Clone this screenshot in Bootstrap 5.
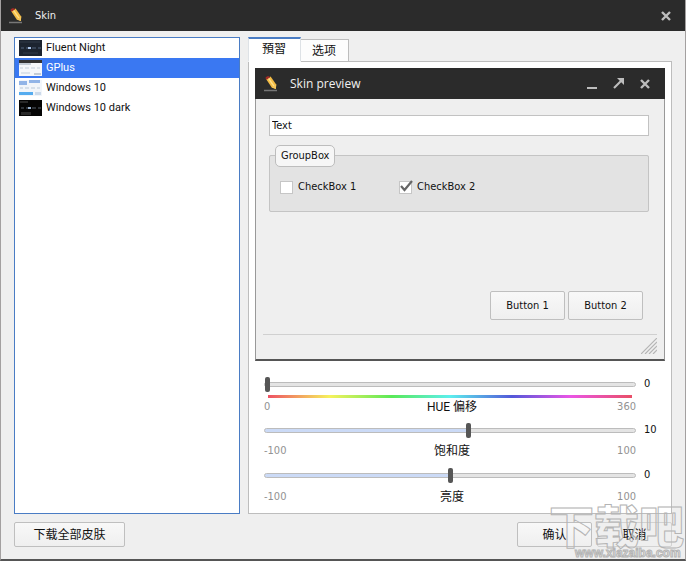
<!DOCTYPE html>
<html lang="zh-CN">
<head>
<meta charset="utf-8">
<meta name="viewport" content="width=device-width, initial-scale=1">
<title>Skin</title>
<link href="https://cdn.jsdelivr.net/npm/bootstrap@5.3.0/dist/css/bootstrap.min.css" rel="stylesheet">
<style>
  :root { --ink: #111; --dark: #2b2b2b; --face: #efefef; --line: #bdbdbd; --blue: #4a7cc4; }
  body { font-family: "DejaVu Sans Condensed", "Noto Sans", "Noto Sans CJK SC", sans-serif; font-size: 11px; line-height: 16px; color: var(--ink); background: var(--face); }
  .zh { font-family: Roboto, "Noto Sans CJK SC", sans-serif; font-size: 12px; }
  .window { border: 1px solid #a3a0a0; border-top: 0; border-bottom: 2px solid #555; overflow: hidden; }
  .titlebar { height: 31px; background: var(--dark); color: #f0f0f0; margin: 0 -1px; padding: 0 15px 0 7px; gap: 10px; }
  .titlebar h1, .titlebar h2 { font-size: 11px; line-height: 16px; font-weight: 400; margin: 0; }
  .titlebar h2 { font-family: "Open Sans", sans-serif; font-size: 12px; }
  .tool { border: 0; background: none; padding: 0; line-height: 0; color: #bdbdbd; }
  .work { display: grid; grid-template-columns: 226px minmax(0, 1fr); column-gap: 8px; padding: 6px 13px 0; }
  .skins { background: #fff; border: 1px solid var(--blue); border-radius: 0; }
  .skins .list-group-item { font-family: Roboto, sans-serif; height: 20px; padding: 0 3px 0 4px; border: 0; border-radius: 0; color: var(--ink); display: flex; align-items: center; gap: 4px; }
  .skins .list-group-item.active { background: #3a78f2; color: #fff; margin: 0; }
  .tabs { padding: 0; border: 0; position: relative; margin-bottom: -1px; align-items: flex-end; }
  .tabs .nav-link { color: var(--ink); border: 1px solid var(--line); border-radius: 0; margin: 0; padding: 0 12px 0 11px; height: 23px; background: #fdfdfd; line-height: 20px; }
  .tabs .nav-link.active { height: 25px; padding: 0 14px 3px 13px; border-top: 2px solid var(--blue); border-bottom-color: #fff; background: #fff; color: var(--ink); }
  .tabs .nav-item + .nav-item .nav-link { border-left: 0; }
  .pane { background: #fff; border: 1px solid var(--line); padding: 6px 6px 0; }
  .preview { background: var(--face); border: 1px solid #999; border-top: 0; border-bottom: 2px solid #555; }
  .preview-form { padding: 16px 15px 0 13px; }
  .field { height: 21px; padding: 0 2px; font-size: 11px; line-height: 16px; color: var(--ink); border: 1px solid #c2c2c2; border-radius: 0; }
  .group { border: 1px solid #c4c4c4; border-radius: 2px; background: #e3e3e3; height: 57px; margin-top: 19px; padding: 0 10px; }
  .group legend { float: left; width: auto; font-size: 11px; line-height: 16px; background: #f6f6f6; border: 1px solid var(--line); border-radius: 5px; padding: 2px 5px; margin: -11px 0 12px -5px; }
  .checks { clear: both; display: grid; grid-template-columns: 119px auto; justify-content: start; }
  .checks .form-check { min-height: 0; margin: 0; padding: 0; display: flex; align-items: center; gap: 5px; }
  .checks .form-check-input { float: none; margin: 0; width: 13px; height: 13px; border: 1px solid #c6c6c6; border-radius: 0; background: #fff; }
  .checks .form-check-input[type=checkbox]:checked { background: #fff; border-color: #c6c6c6; }
  .tick { position: absolute; left: 1px; top: 0; pointer-events: none; }
  .btn-face { font-size: 11px; line-height: 16px; color: var(--ink); border: 1px solid #bfbfbf; border-radius: 2px; background: linear-gradient(#f8f8f8, #efefef); min-width: 75px; padding: 4px 8px; height: 25px; }
  .btn-face.zh { font-size: 12px; }
  .btn-tall { height: 29px; padding: 5px 8px; }
  .buttons { margin-top: 79px; padding-right: 6px; gap: 3px; }
  .statusbar { margin: 14px 7px 5px; border-top: 1px solid #d0d0d0; height: 20px; }
  .sliders { display: grid; grid-template-columns: minmax(0, 1fr) 21px; column-gap: 8px; padding: 15px 0 0 9px; }
  .form-range { display: block; height: 16px; }
  .form-range::-webkit-slider-runnable-track { height: 5px; border: 1px solid #bcbcbc; border-radius: 3px; background: linear-gradient(#cbdaf6, #cbdaf6) 0 0 / var(--fill) 100% no-repeat #e4e4e4; }
  .form-range::-webkit-slider-thumb { width: 5px; height: 15px; margin-top: -6px; border-radius: 2px; background: #565656; box-shadow: none; }
  .spectrum { height: 3px; margin: 3px 4px 1px; background: linear-gradient(90deg, #ee5164, #f6f25c 17%, #59e957 34%, #5cefee 50%, #5358d9 67%, #ea55e6 83%, #e94f67); }
  .scale { display: grid; grid-template-columns: 1fr auto 1fr; color: #929292; line-height: 16px; }
  .scale span:last-child { text-align: right; }
  .scale label { color: var(--ink); padding-left: 4px; }
  .scale-1 { margin-bottom: 7px; }
  .scale-2 { margin: 5px 0 8px; }
  .scale-3 { margin: 6px 0 8px; }
  .footer-bar { padding: 8px 13px 12px; gap: 5px; }
  .btn-wide { width: 111px; }
  .btn-faint { border-color: #d2d2d2; background: none; }
  .stamp { position: absolute; right: 0; bottom: 0; width: 136px; pointer-events: none; }
</style>
<script src="https://cdn.jsdelivr.net/npm/bootstrap@5.3.0/dist/js/bootstrap.bundle.min.js"></script>
</head>
<body>
<svg width="0" height="0" class="position-absolute" aria-hidden="true">
  <symbol id="pencil" viewBox="0 0 18 18">
    <path d="M2 15.5h13" stroke="#777" stroke-width="1.5"/>
    <path d="M4.2 4.2 8.6 1.5l5.6 8.1-.3 4.5-4.2-1.7z" fill="#f4bd45"/>
    <path d="m6.3 3 5.8 8.3" stroke="#ffe08a" stroke-width="1.4"/>
    <path d="M3.4 3C4 1.4 5.8.8 7 1.3l1.2 1L4.5 4.8z" fill="#a02c26"/>
    <path d="m9.7 12.4 4.5-2.8-.3 4.5z" fill="#f4c65c"/>
  </symbol>
  <symbol id="cross" viewBox="0 0 10 10"><path d="m1 1 8 8M9 1 1 9" stroke="currentColor" stroke-width="2.4"/></symbol>
</svg>

<div class="window min-vh-100 d-flex flex-column position-relative">
  <header class="titlebar d-flex align-items-center">
    <svg width="18" height="18" aria-hidden="true"><use href="#pencil"/></svg>
    <h1 class="flex-grow-1">Skin</h1>
    <button type="button" class="tool" aria-label="Close"><svg width="10" height="10"><use href="#cross"/></svg></button>
  </header>

  <main class="work flex-grow-1">
    <div class="skins list-group">
      <button type="button" class="list-group-item list-group-item-action">
        <svg width="23" height="16" aria-hidden="true"><path fill="#1c2430" d="M0 0h23v16H0z"/><path d="M1 2h20M4 13h15" stroke="#303b49"/><path d="M2 8h3m2 0h2m4 0h4m2 0h3" stroke="#53657e"/><path fill="#a9c4ea" d="M9 7h3v2H9z"/></svg>
        Fluent Night</button>
      <button type="button" class="list-group-item list-group-item-action active">
        <svg width="23" height="16" aria-hidden="true"><path fill="#f5f7fa" d="M0 0h23v16H0z"/><path fill="#333" d="M0 0h23v3H0z"/><path fill="#c4ccd5" d="M0 3h12v2H0zM15 13h7v2h-7z"/><path d="M1 8h3m2 0h4m2 0h4m2 0h3M2 13h9" stroke="#c3cfdc"/></svg>
        GPlus</button>
      <button type="button" class="list-group-item list-group-item-action">
        <svg width="23" height="16" aria-hidden="true"><path fill="#f1f5fa" d="M0 0h23v16H0z"/><path fill="#91b4e7" d="M0 1h8v4H0zM10 0h11v3H10z"/><path d="M1 8h3m2 0h4m2 0h4m2 0h3" stroke="#b9c9da"/><path fill="#55acef" d="M0 12h14v3H0z"/><path fill="#ccdaea" d="M16 12h6v3h-6z"/></svg>
        Windows 10</button>
      <button type="button" class="list-group-item list-group-item-action">
        <svg width="23" height="16" aria-hidden="true"><path fill="#050505" d="M0 0h23v16H0z"/><path fill="#292929" d="M1 1h8v2H1zM2 12h10v3H2z"/><path d="M2 8h3m2 0h2m4 0h4m2 0h3" stroke="#56606c"/><path fill="#9ab4d3" d="M9 7h3v2H9z"/></svg>
        Windows 10 dark</button>
    </div>

    <section class="d-flex flex-column">
      <ul class="tabs nav nav-tabs" role="tablist">
        <li class="nav-item" role="presentation"><button type="button" class="nav-link active zh" lang="zh-TW" role="tab" aria-selected="true">預習</button></li>
        <li class="nav-item" role="presentation"><button type="button" class="nav-link zh" role="tab" aria-selected="false">选项</button></li>
      </ul>
      <div class="pane flex-grow-1">
        <div class="preview">
          <div class="titlebar d-flex align-items-center">
            <svg width="18" height="18" aria-hidden="true"><use href="#pencil"/></svg>
            <h2 class="flex-grow-1">Skin preview</h2>
            <div class="d-flex align-items-center gap-3">
              <button type="button" class="tool" aria-label="Minimize"><svg width="10" height="10"><path fill="currentColor" d="M0 8h10v2H0z"/></svg></button>
              <button type="button" class="tool" aria-label="Maximize"><svg width="11" height="11"><path d="m1 10 7-7" stroke="currentColor" stroke-width="2.2"/><path fill="currentColor" d="M4 0h7v7z"/></svg></button>
              <button type="button" class="tool" aria-label="Close preview"><svg width="10" height="10"><use href="#cross"/></svg></button>
            </div>
          </div>
          <form class="preview-form">
            <input class="form-control field" type="text" value="Text" aria-label="Text">
            <fieldset class="group">
              <legend>GroupBox</legend>
              <div class="checks">
                <div class="form-check"><input class="form-check-input" type="checkbox" id="c1"><label for="c1">CheckBox 1</label></div>
                <div class="form-check position-relative"><input class="form-check-input" type="checkbox" id="c2" checked><svg class="tick" width="14" height="14" aria-hidden="true"><path d="m1 7 3.5 4L12 2" fill="none" stroke="#666" stroke-width="2.2"/></svg><label for="c2">CheckBox 2</label></div>
              </div>
            </fieldset>
            <div class="buttons d-flex justify-content-end">
              <button type="button" class="btn btn-face btn-tall">Button 1</button>
              <button type="button" class="btn btn-face btn-tall">Button 2</button>
            </div>
          </form>
          <div class="statusbar d-flex justify-content-end align-items-end">
            <svg width="16" height="16" aria-hidden="true"><path d="M0 16 16 0M4 16 16 4M8 16l8-8M12 16l4-4" stroke="#b5b5b5" stroke-width="1.2"/></svg>
          </div>
        </div>

        <div class="sliders">
          <input type="range" class="form-range" id="hue" min="0" max="360" value="0" style="--fill:0%">
          <output for="hue">0</output>
          <div>
            <div class="spectrum"></div>
            <div class="scale scale-1"><span>0</span><label class="zh" for="hue">HUE 偏移</label><span>360</span></div>
          </div><span></span>
          <input type="range" class="form-range" id="sat" min="-100" max="100" value="10" style="--fill:55%">
          <output for="sat">10</output>
          <div class="scale scale-2"><span>-100</span><label class="zh" for="sat">饱和度</label><span>100</span></div><span></span>
          <input type="range" class="form-range" id="lum" min="-100" max="100" value="0" style="--fill:50%">
          <output for="lum">0</output>
          <div class="scale scale-3"><span>-100</span><label class="zh" for="lum">亮度</label><span>100</span></div><span></span>
        </div>
      </div>
    </section>
  </main>

  <footer class="footer-bar d-flex">
    <button type="button" class="btn btn-face btn-wide zh me-auto">下载全部皮肤</button>
    <button type="button" class="btn btn-face zh">确认</button>
    <button type="button" class="btn btn-face btn-faint zh">取消</button>
  </footer>

  <svg class="stamp" height="58" viewBox="0 0 136 58" fill="none" stroke="#b4b4b4">
    <text x="0" y="43" font-family="Noto Sans CJK SC, sans-serif" font-weight="900" font-size="45" stroke-width="1">下载吧</text>
    <text x="26" y="56" font-family="Liberation Sans, sans-serif" font-weight="700" font-size="12" stroke-width="1">www.xiazaiba.com</text>
  </svg>
</div>
</body>
</html>
